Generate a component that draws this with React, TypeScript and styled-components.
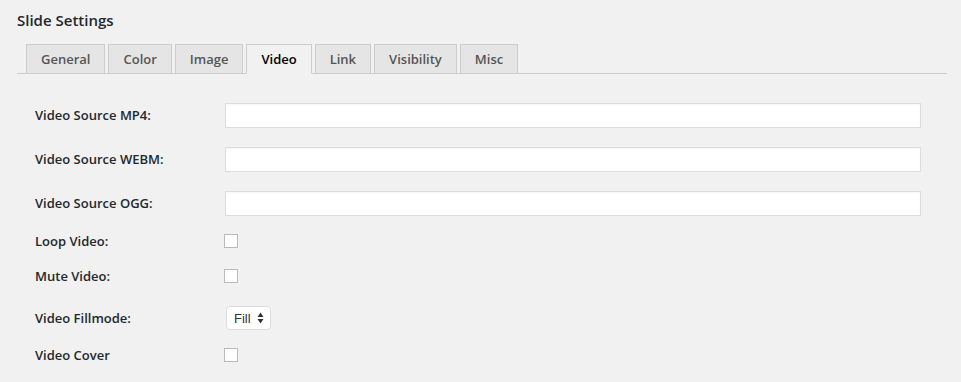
import React from "react";
import styled, { createGlobalStyle } from "styled-components";

const Global = createGlobalStyle`
  html, body { margin: 0; padding: 0; background: #f1f1f1; }
  body { font-family: "Open Sans", "Liberation Sans", sans-serif; color: #23282d; }
  * { box-sizing: border-box; }
`;

const Page = styled.div`
  width: 961px;
  height: 382px;
  padding: 10px 14px 0 17px;
  background: #f1f1f1;
  overflow: hidden;
`;

const Title = styled.h2`
  margin: 0;
  font-size: 15px;
  font-weight: 600;
  line-height: 20px;
  color: #23282d;
`;

const TabBar = styled.div`
  display: flex;
  align-items: flex-end;
  gap: 3px;
  margin-top: 14px;
  padding-left: 9px;
  height: 30px;
  border-bottom: 1px solid #ccc;
`;

const Tab = styled.div<{ $active?: boolean }>`
  height: ${(p) => (p.$active ? "30px" : "29px")};
  margin-bottom: ${(p) => (p.$active ? "-1px" : "0")};
  padding: 0 14px;
  display: flex;
  align-items: center;
  font-size: 13px;
  font-weight: 600;
  color: ${(p) => (p.$active ? "#000" : "#555")};
  background: ${(p) => (p.$active ? "#f1f1f1" : "#e5e5e5")};
  border: 1px solid #ccc;
  border-bottom: ${(p) => (p.$active ? "1px solid #f1f1f1" : "none")};
`;

const Form = styled.div`
  display: flex;
  flex-direction: column;
  padding-top: 19px;
`;

const Row = styled.div<{ $h: number }>`
  display: flex;
  align-items: center;
  height: ${(p) => p.$h}px;
`;

const Label = styled.label`
  width: 208px;
  padding-left: 18px;
  flex-shrink: 0;
  font-size: 13px;
  font-weight: 600;
  color: #23282d;
`;

const TextInput = styled.input`
  width: 696px;
  height: 25px;
  border: 1px solid #ddd;
  background: #fff;
  box-shadow: inset 0 1px 2px rgba(0, 0, 0, 0.04);
  outline: none;
  margin: 0;
`;

const Check = styled.input`
  appearance: none;
  width: 14px;
  height: 14px;
  margin: 0 0 0 -1px;
  border: 1px solid #bbb;
  background: #fff;
`;

const SelectWrap = styled.div`
  position: relative;
  margin-left: 1px;
  width: 45px;
  height: 24px;
`;

const Select = styled.select`
  appearance: none;
  width: 45px;
  height: 24px;
  border: 1px solid #ddd;
  border-radius: 4px;
  background: #fff;
  padding: 0 0 0 7px;
  font-family: "Liberation Sans", sans-serif;
  font-size: 13px;
  color: #333;
  outline: none;
`;

const Arrows = styled.svg`
  position: absolute;
  right: 7px;
  top: 6px;
  pointer-events: none;
`;

const tabs = ["General", "Color", "Image", "Video", "Link", "Visibility", "Misc"];

export default function App() {
  return (
    <Page>
      <Global />
      <Title>Slide Settings</Title>
      <TabBar>
        {tabs.map((t) => (
          <Tab key={t} $active={t === "Video"}>
            {t}
          </Tab>
        ))}
      </TabBar>
      <Form>
        <Row $h={44}>
          <Label>Video Source MP4:</Label>
          <TextInput type="text" />
        </Row>
        <Row $h={44}>
          <Label>Video Source WEBM:</Label>
          <TextInput type="text" />
        </Row>
        <Row $h={44}>
          <Label>Video Source OGG:</Label>
          <TextInput type="text" />
        </Row>
        <Row $h={31}>
          <Label>Loop Video:</Label>
          <Check type="checkbox" />
        </Row>
        <Row $h={39}>
          <Label>Mute Video:</Label>
          <Check type="checkbox" />
        </Row>
        <Row $h={45}>
          <Label>Video Fillmode:</Label>
          <SelectWrap>
            <Select defaultValue="fill">
              <option value="fill">Fill</option>
              <option value="fit">Fit</option>
            </Select>
            <Arrows width="7" height="12" viewBox="0 0 7 12">
              <path d="M3.5 0.5 L6.5 5 L0.5 5 Z" fill="#333" />
              <path d="M3.5 11.5 L6.5 7 L0.5 7 Z" fill="#333" />
            </Arrows>
          </SelectWrap>
        </Row>
        <Row $h={29}>
          <Label>Video Cover</Label>
          <Check type="checkbox" />
        </Row>
      </Form>
    </Page>
  );
}
